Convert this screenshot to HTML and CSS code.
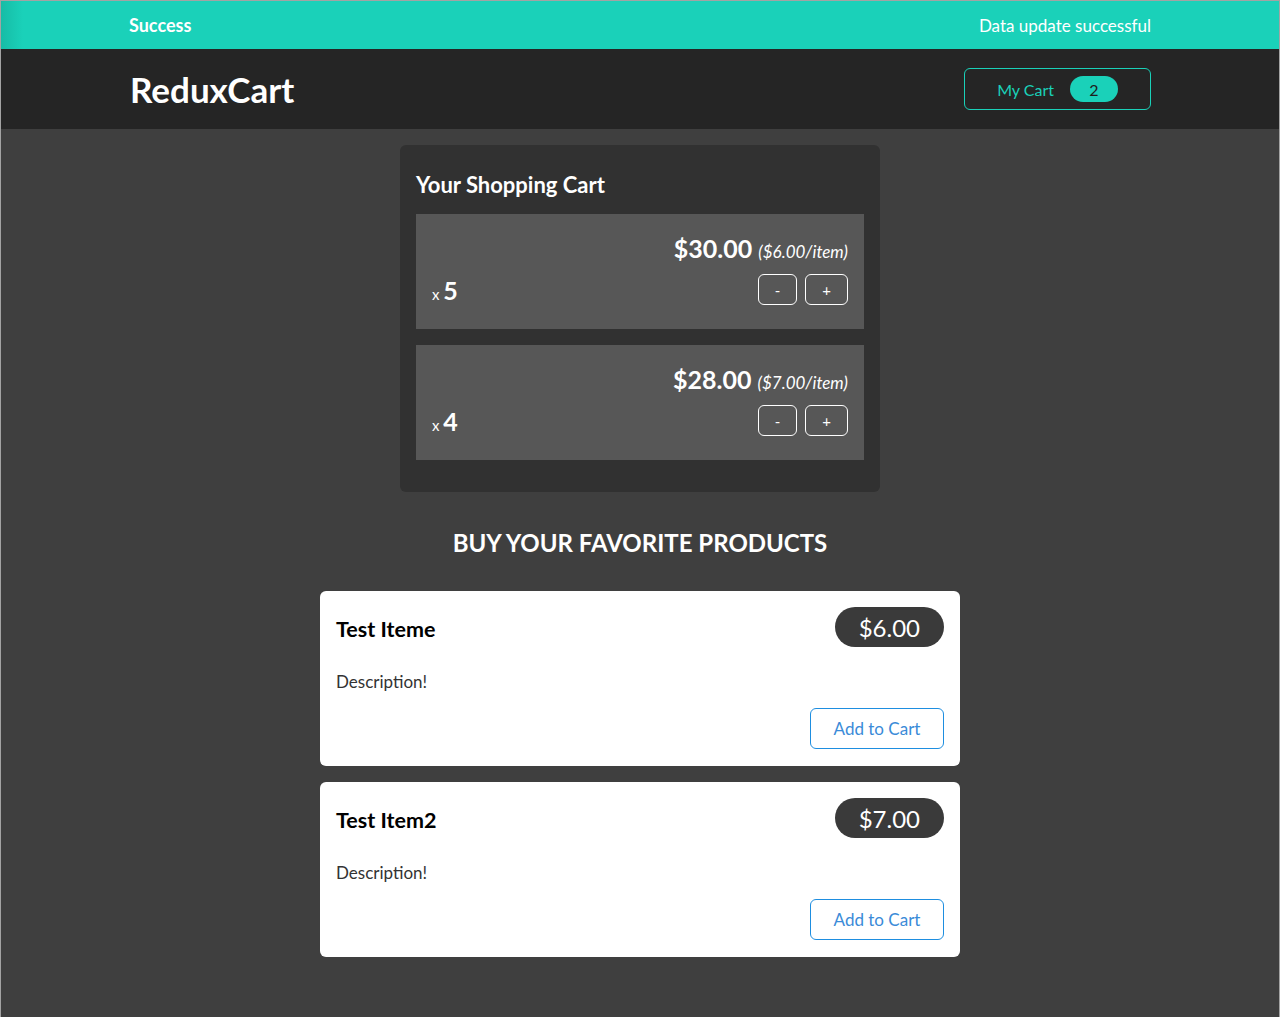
FILE: index.html
```html
<!DOCTYPE html>
<html lang="en">
<head>
<meta charset="utf-8">
<title>ReduxCart</title>
<link rel="stylesheet" href="styles.css">
</head>
<body>
<div class="frame">
  <section class="notification">
    <h2 class="notification-title">Success</h2>
    <p class="notification-message">Data update successful</p>
  </section>
  <header class="main-header">
    <h1 class="logo">ReduxCart</h1>
    <nav>
      <button class="cart-button">
        <span>My Cart</span>
        <span class="badge">2</span>
      </button>
    </nav>
  </header>
  <main class="main">
    <section class="cart">
      <h2 class="cart-title">Your Shopping Cart</h2>
      <ul class="cart-list">
        <li class="cart-item">
          <div class="cart-item-price">$30.00 <span class="per-item">($6.00/item)</span></div>
          <div class="cart-item-details">
            <div class="quantity">x <span class="quantity-num">5</span></div>
            <div class="cart-actions">
              <button class="qty-btn">-</button>
              <button class="qty-btn">+</button>
            </div>
          </div>
        </li>
        <li class="cart-item">
          <div class="cart-item-price">$28.00 <span class="per-item">($7.00/item)</span></div>
          <div class="cart-item-details">
            <div class="quantity">x <span class="quantity-num">4</span></div>
            <div class="cart-actions">
              <button class="qty-btn">-</button>
              <button class="qty-btn">+</button>
            </div>
          </div>
        </li>
      </ul>
    </section>
    <section class="products">
      <h2 class="products-title">BUY YOUR FAVORITE PRODUCTS</h2>
      <ul class="product-list">
        <li class="product-card">
          <header class="product-header">
            <h3 class="product-name">Test Iteme</h3>
            <div class="product-price">$6.00</div>
          </header>
          <p class="product-desc">Description!</p>
          <div class="product-actions">
            <button class="add-btn">Add to Cart</button>
          </div>
        </li>
        <li class="product-card">
          <header class="product-header">
            <h3 class="product-name">Test Item2</h3>
            <div class="product-price">$7.00</div>
          </header>
          <p class="product-desc">Description!</p>
          <div class="product-actions">
            <button class="add-btn">Add to Cart</button>
          </div>
        </li>
      </ul>
    </section>
  </main>
</div>
</body>
</html>
```

FILE: styles.css
```css
* { box-sizing: border-box; }

html, body {
  margin: 0;
  padding: 0;
  background: #3f3f3f;
  font-family: "Lato", "Open Sans", sans-serif;
}

.frame {
  min-height: 100vh;
  border: 1px solid #a3a3a3;
  border-bottom: none;
  background: #3f3f3f;
}

.notification {
  height: 48px;
  background: #1ad1b9;
  color: #fff;
  display: flex;
  align-items: center;
  justify-content: space-between;
  padding: 0 128px 0 128px;
  background-image: linear-gradient(to right, #17bca6 0, #1ad1b9 22px);
}

.notification-title {
  margin: 0;
  font-size: 18px;
  font-weight: 700;
}

.notification-message {
  margin: 0;
  font-size: 17px;
  font-weight: 400;
}

.main-header {
  height: 80px;
  background: #252525;
  display: flex;
  align-items: center;
  justify-content: space-between;
  padding: 0 128px 0 129px;
}

.logo {
  margin: 0;
  color: #fff;
  font-size: 35px;
  font-weight: 700;
}

.cart-button {
  display: flex;
  align-items: center;
  gap: 16px;
  height: 42px;
  padding: 0 32px;
  background: transparent;
  border: 1px solid #1ad1b9;
  border-radius: 6px;
  color: #1ad1b9;
  font-family: inherit;
  font-size: 16px;
  cursor: pointer;
}

.badge {
  background: #1ad1b9;
  color: #1e1e1e;
  border-radius: 13px;
  height: 26px;
  width: 48px;
  display: flex;
  align-items: center;
  justify-content: center;
  font-size: 16px;
}

.main {
  padding-top: 16px;
}

.cart {
  width: 480px;
  margin: 0 auto;
  background: #313131;
  border-radius: 6px;
  padding: 16px 16px 32px;
  color: #fff;
}

.cart-title {
  margin: 10px 0 16px;
  font-size: 22px;
  line-height: 27px;
  font-weight: 700;
}

.cart-list {
  list-style: none;
  margin: 0;
  padding: 0;
  display: flex;
  flex-direction: column;
  gap: 16px;
}

.cart-item {
  background: #575757;
  height: 115px;
  padding: 19px 16px 0;
}

.cart-item-price {
  text-align: right;
  font-size: 25px;
  line-height: 31px;
  font-weight: 700;
}

.per-item {
  font-size: 17px;
  font-weight: 400;
  font-style: italic;
}

.cart-item-details {
  display: flex;
  justify-content: space-between;
  align-items: flex-end;
  margin-top: 7px;
}

.quantity {
  font-size: 15px;
  line-height: 1;
  margin-bottom: 2px;
}

.quantity-num {
  font-size: 25px;
  font-weight: 700;
}

.cart-actions {
  display: flex;
  gap: 8px;
}

.qty-btn {
  height: 31px;
  padding: 0 16px;
  background: transparent;
  border: 1px solid #fff;
  border-radius: 6px;
  color: #fff;
  font-family: inherit;
  font-size: 15px;
  cursor: pointer;
}

.products {
  padding-bottom: 40px;
}

.products-title {
  margin: 36px 0 33px;
  text-align: center;
  color: #fff;
  font-size: 24px;
  line-height: 30px;
  font-weight: 700;
}

.product-list {
  list-style: none;
  margin: 0 auto;
  padding: 0;
  width: 640px;
  display: flex;
  flex-direction: column;
  gap: 16px;
}

.product-card {
  background: #fff;
  border-radius: 6px;
  padding: 16px 16px 17px;
}

.product-header {
  display: flex;
  justify-content: space-between;
  align-items: baseline;
  height: 40px;
}

.product-name {
  margin: 0;
  font-size: 21.5px;
  font-weight: 700;
  color: #000;
}

.product-price {
  height: 40px;
  padding: 0 24px;
  border-radius: 20px;
  background: #3a3a3a;
  color: #fff;
  font-size: 24px;
  display: flex;
  align-items: center;
}

.product-desc {
  margin: 23px 0 14px;
  font-size: 17px;
  line-height: 24px;
  color: #333;
}

.product-actions {
  display: flex;
  justify-content: flex-end;
}

.add-btn {
  width: 134px;
  height: 41px;
  background: #fff;
  border: 1px solid #1e8ee0;
  border-radius: 6px;
  color: #3a8bd8;
  font-family: inherit;
  font-size: 17px;
  cursor: pointer;
}
```
